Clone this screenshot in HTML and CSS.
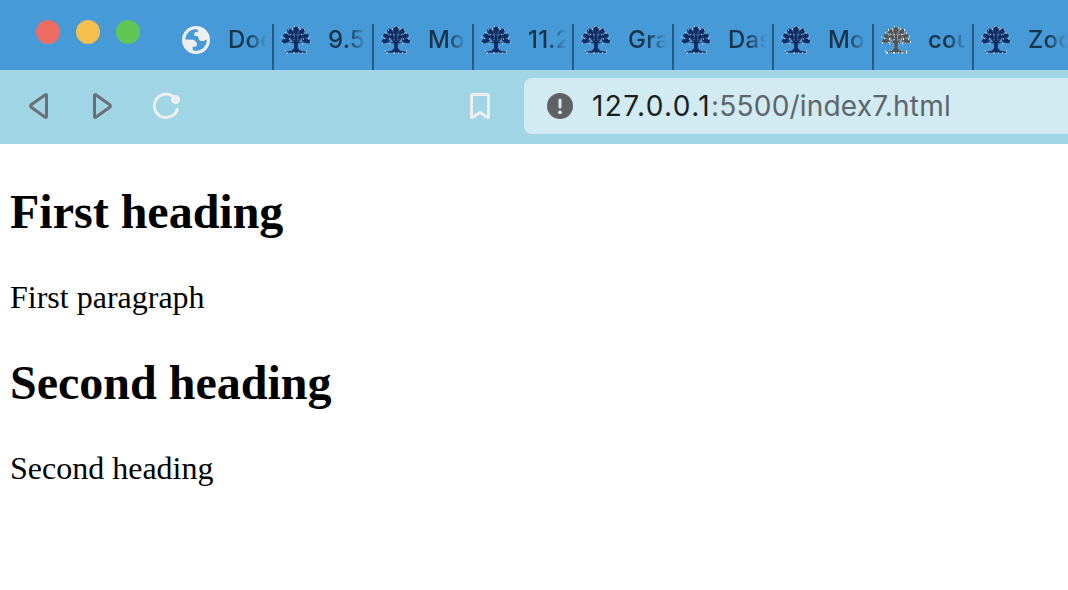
FILE: index.html
```html
<!DOCTYPE html>
<html lang="en">
<head>
<meta charset="utf-8">
<title>Document</title>
<link rel="stylesheet" href="styles.css">
</head>
<body>
<svg class="defs" aria-hidden="true">
  <symbol id="tree" viewBox="0 0 30 28">
    <g class="tree-leaf">
      <ellipse cx="4.800" cy="14.800" rx="4.300" ry="2.300" transform="rotate(-15 4.800 14.800)"/>
      <ellipse cx="6" cy="10.400" rx="4" ry="2.300" transform="rotate(25 6 10.400)"/>
      <ellipse cx="9.500" cy="6" rx="3.800" ry="2.600" transform="rotate(45 9.500 6)"/>
      <ellipse cx="15" cy="4.800" rx="2.900" ry="4.200"/>
      <ellipse cx="20.500" cy="6" rx="3.800" ry="2.600" transform="rotate(-45 20.500 6)"/>
      <ellipse cx="24" cy="10.400" rx="4" ry="2.300" transform="rotate(-25 24 10.400)"/>
      <ellipse cx="25.200" cy="14.800" rx="4.300" ry="2.300" transform="rotate(15 25.200 14.800)"/>
      <ellipse cx="11" cy="11" rx="3.500" ry="2.200" transform="rotate(50 11 11)"/>
      <ellipse cx="19" cy="11" rx="3.500" ry="2.200" transform="rotate(-50 19 11)"/>
      <path d="M13 22v-4.500l-6-.8 5-.7-3-4 4.500 2.500V8h3v6.500L21 12l-3 4 5 .7-6 .8V22l2 2.500 7 1.300v1H4v-1l7-1.300z"/>
    </g>
    <path class="tree-gap" d="M1 17h1M3 12.500h1M0 11h1M4 6.500h1M7 4h1M11 3h1M13 .5h1M17 1.500h1M19 3h1M23 4h1M25 7h1M28 11h1M27 13h1M29 16h1M8.500 18h1M21 18h1M9 8.500h1M20 8.500h1M8 13h1M22 13h1M5 27h2M12 27h2M17 27h1M21 27h1M25 27h1M4 25h1M25 25h1"/>
  </symbol>
</svg>

<header class="browser">
  <div class="tabstrip">
    <div class="lights"><i class="light red"></i><i class="light yellow"></i><i class="light green"></i></div>
    <div class="tab">
      <svg class="globe" viewBox="0 0 28 28"><circle cx="14" cy="14" r="14" fill="#eee"/><path fill="#469ad7" d="M3.300 13.500A10.700 10.700 0 0 1 15.800 3.400V6l-3.100.4-.4 1.300v2.100l3 .2 1.200 1.400.4 2.300 1.500 1.200 3.300.1 3-1.500A10.700 10.700 0 0 1 10.700 24.300v-3.600l3.300-.3.800-.7v-3l-3.100-2.900z"/></svg>
      <span class="label">Doc</span>
    </div>
    <div class="tab"><svg class="tree"><use href="#tree"/></svg><span class="label">9.5</span></div>
    <div class="tab"><svg class="tree"><use href="#tree"/></svg><span class="label">Mod</span></div>
    <div class="tab"><svg class="tree"><use href="#tree"/></svg><span class="label">11.2</span></div>
    <div class="tab"><svg class="tree"><use href="#tree"/></svg><span class="label">Gra</span></div>
    <div class="tab"><svg class="tree"><use href="#tree"/></svg><span class="label">Das</span></div>
    <div class="tab"><svg class="tree"><use href="#tree"/></svg><span class="label">Mod</span></div>
    <div class="tab"><svg class="tree gray"><use href="#tree"/></svg><span class="label">cou</span></div>
    <div class="tab"><svg class="tree"><use href="#tree"/></svg><span class="label">Zoo</span></div>
  </div>
  <div class="toolbar">
    <svg class="nav" viewBox="0 0 200 74">
      <g fill="none" stroke="#6d6e76" stroke-width="3" stroke-linejoin="round">
        <path d="M45.300 24.800q1.200-.6 1.200.8v20.800q0 1.400-1.200.8L31.200 37.300q-1.200-1.300 0-2.600z"/>
        <path d="M95.700 24.800q-1.200-.6-1.200.8v20.800q0 1.400 1.200.8l14.100-9.900q1.200-1.300 0-2.600z"/>
      </g>
      <path d="M172.500 26A11.700 11.700 0 1 0 177.200 39.500" fill="none" stroke="#eee" stroke-width="3" stroke-linecap="round"/>
      <circle cx="175.500" cy="29.500" r="4.600" fill="#eee"/>
    </svg>
    <svg class="bookmark" viewBox="0 0 20 26"><path d="M3 1.500h14q1.500 0 1.500 1.500v20.500q0 1.500-1.300.7L11 20q-1-.7-2 0l-6.200 4.200q-1.300.8-1.300-.7V3q0-1.500 1.500-1.500z" fill="none" stroke="#eee" stroke-width="3" stroke-linejoin="round"/></svg>
    <div class="address">
      <svg class="info" viewBox="0 0 26 26"><circle cx="13" cy="13" r="13" fill="#606067"/><path d="M13 7v7" stroke="#d2eaf1" stroke-width="3" stroke-linecap="round"/><circle cx="13" cy="19.300" r="1.900" fill="#d2eaf1"/></svg>
      <span class="url"><span class="host">127.0.0.1</span>:5500/index7.html</span>
    </div>
  </div>
</header>
<main class="page">
  <h2>First heading</h2>
  <p>First paragraph</p>
  <h2>Second heading</h2>
  <p>Second heading</p>
</main>
</body>
</html>
```
FILE: styles.css
```css
* { box-sizing: border-box; }
body { margin: 0; width: 1068px; height: 590px; overflow: hidden; background: #fff; }
.defs { display: none; }
.tabstrip { display: flex; align-items: flex-end; height: 70px; overflow: hidden; background: #469ad7; }
.lights { display: flex; flex: none; gap: 16px; width: 174px; height: 50px; padding-left: 36px; }
.light { width: 24px; height: 24px; border-radius: 50%; }
.red { background: #ed6b60; }
.yellow { background: #f5bf50; }
.green { background: #62c655; }
.tab { display: flex; flex: none; width: 100px; height: 46px; padding-left: 7px; border-right: 2px solid #265c82; }
.globe { flex: none; width: 28px; height: 28px; margin: 2px 1px; }
.tree { flex: none; width: 30px; height: 28px; margin-top: 2px; }
.label {
  width: 38px; height: 32px; margin-left: 17px; overflow: hidden; white-space: nowrap;
  font: 450 24px/32px Inter, sans-serif; letter-spacing: 0.2px; color: #17344a;
  -webkit-mask-image: linear-gradient(90deg, #000 50%, transparent 102%);
  mask-image: linear-gradient(90deg, #000 50%, transparent 102%);
}
.tree-leaf { fill: #112c63; stroke: #7f9cc4; stroke-width: 0.5; stroke-dasharray: 0.9 1.5; }
.tree-gap { stroke: #d3deea; stroke-width: 1; }
.gray { filter: grayscale(1) brightness(2); }
.toolbar { display: flex; align-items: center; height: 74px; background: #9fd5e4; }
.nav { flex: none; width: 200px; height: 74px; }
.bookmark { flex: none; width: 20px; height: 26px; margin: 0 34px 2px 270px; }
.address { display: flex; flex: 1; align-items: center; height: 56px; padding-left: 23px; margin-bottom: 2px; border-radius: 8px 0 0 8px; background: #d2eaf1; }
.info { flex: none; width: 26px; height: 26px; margin-right: 19px; }
.url { font: 28px/36px Inter, sans-serif; letter-spacing: 0.2px; white-space: nowrap; color: #5c666b; }
.host { letter-spacing: 1.4px; color: #1b1e21; }
.page { padding: 40px 10px 0; font-family: "Liberation Serif", serif; color: #000; }
.page h2 { margin: 0 0 40px; font-size: 48px; line-height: 55px; }
.page p { margin: 0 0 40px; font-size: 32px; line-height: 36px; }
```
